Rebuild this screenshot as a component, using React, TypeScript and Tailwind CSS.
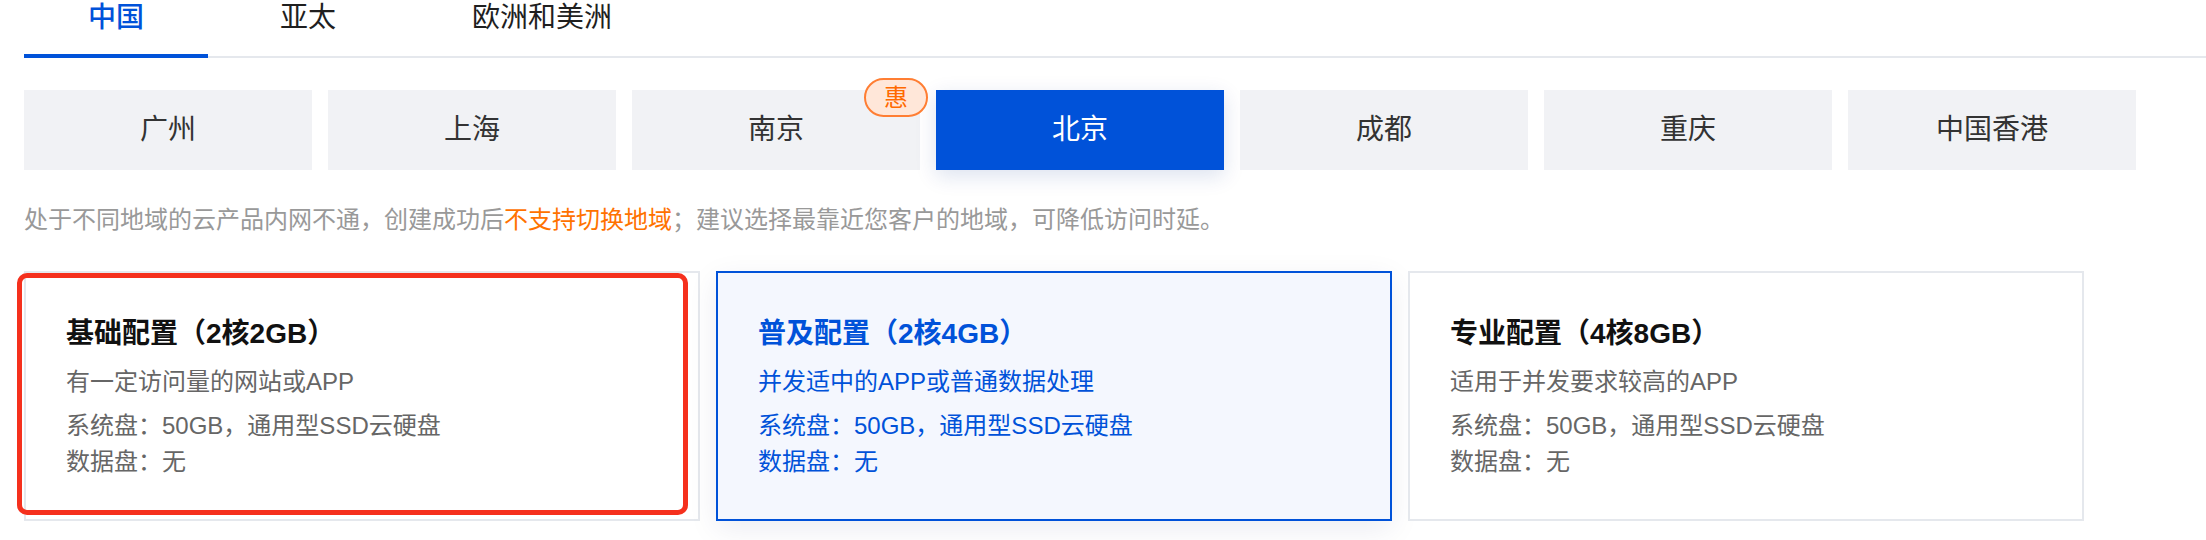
import { useState } from 'react'

const regions = ['广州', '上海', '南京', '北京', '成都', '重庆', '中国香港']
const areas = ['中国', '亚太', '欧洲和美洲']

const plans = [
  { title: '基础配置（2核2GB）', desc: '有一定访问量的网站或APP' },
  { title: '普及配置（2核4GB）', desc: '并发适中的APP或普通数据处理' },
  { title: '专业配置（4核8GB）', desc: '适用于并发要求较高的APP' },
]

const font = { fontFamily: '"Liberation Sans", "Noto Sans CJK SC", sans-serif' }

export default function App() {
  const [area, setArea] = useState(0)
  const [region, setRegion] = useState(3)
  const [plan, setPlan] = useState(1)

  return (
    <div className="min-h-[540px] bg-white pl-[24px]" style={font}>
      {/* area tabs */}
      <div className="flex gap-[8px] border-b-2 border-[#e5e8ed]">
        {areas.map((a, i) => (
          <button
            key={a}
            onClick={() => setArea(i)}
            className={`-mb-[2px] border-b-4 px-[64px] pb-[18px] text-[28px] leading-[36px] ${
              area === i ? 'border-[#0052d9] font-medium text-[#0052d9]' : 'border-transparent text-[#1f1f1f]'
            }`}
          >
            {a}
          </button>
        ))}
      </div>

      {/* region buttons */}
      <div className="mt-[32px] flex gap-[16px]">
        {regions.map((r, i) => (
          <button
            key={r}
            onClick={() => setRegion(i)}
            className={`relative flex h-[80px] w-[288px] items-center justify-center text-[28px] ${
              region === i
                ? 'bg-[#0052d9] text-white shadow-[0_6px_20px_rgba(0,50,140,0.14)]'
                : 'bg-[#f1f2f5] text-[#333333]'
            }`}
          >
            {r}
            {r === '南京' && (
              <span className="absolute -right-[8px] -top-[12px] z-10 flex h-[39px] w-[64px] items-center justify-center rounded-full border-2 border-[#ff7e33] bg-[#ffe7d9] text-[24px] leading-none text-[#ff6a00]">
                惠
              </span>
            )}
          </button>
        ))}
      </div>

      {/* notice */}
      <p className="mt-[32px] text-[24px] leading-[36px] text-[#999999]">
        处于不同地域的云产品内网不通，创建成功后<span className="text-[#ff7200]">不支持切换地域</span>
        ；建议选择最靠近您客户的地域，可降低访问时延。
      </p>

      {/* plans */}
      <div className="mt-[33px] flex gap-[16px]">
        {plans.map((p, i) => {
          const active = plan === i
          return (
            <div
              key={p.title}
              onClick={() => setPlan(i)}
              className={`relative h-[250px] w-[676px] cursor-pointer border-2 pl-[40px] pt-[39px] ${
                active
                  ? 'border-[#0052d9] bg-[#f4f7fe] text-[#0052d9] shadow-[0_8px_28px_rgba(0,30,90,0.08)]'
                  : 'border-[#e5e8ed] bg-white text-[#666666]'
              }`}
            >
              <div className={`text-[28px] font-bold leading-[44px] ${active ? '' : 'text-[#111111]'}`}>
                {p.title}
              </div>
              <div className="mt-[8px] text-[24px] leading-[36px]">{p.desc}</div>
              <div className="mt-[8px] text-[24px] leading-[36px]">系统盘：50GB，通用型SSD云硬盘</div>
              <div className="text-[24px] leading-[36px]">数据盘：无</div>
              {i === 0 && (
                <div className="pointer-events-none absolute -left-[9px] top-[0px] h-[242px] w-[671px] rounded-[10px] border-[5px] border-[#f5301d]" />
              )}
            </div>
          )
        })}
      </div>
    </div>
  )
}
